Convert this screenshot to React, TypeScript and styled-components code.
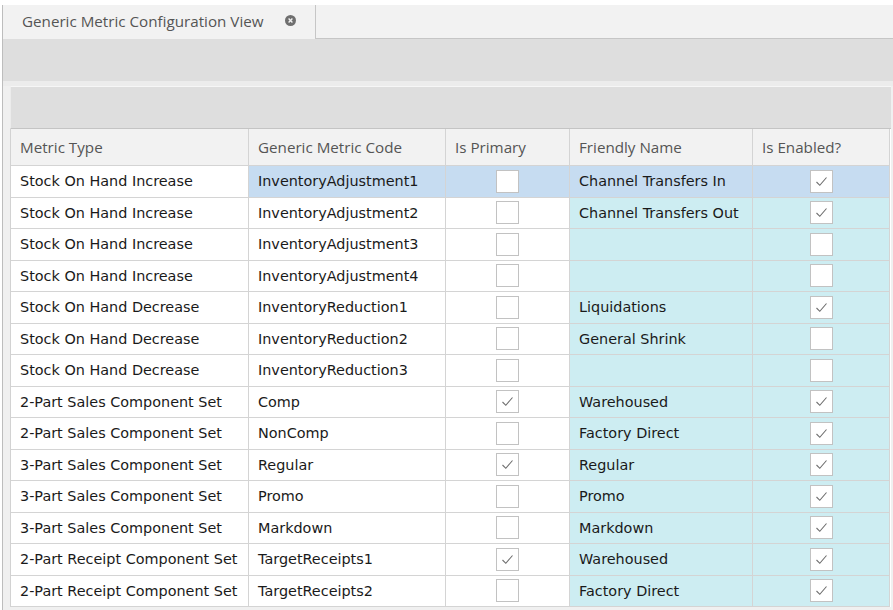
import React from "react";
import styled, { createGlobalStyle } from "styled-components";

const Global = createGlobalStyle`
  html, body { margin: 0; padding: 0; background: #ffffff; }
  body { width: 893px; height: 610px; overflow: hidden; }
  * { box-sizing: border-box; }
`;

const Page = styled.div`
  width: 893px;
  height: 610px;
  padding-top: 5px;
  padding-left: 2px;
  background: #ffffff;
`;

const Frame = styled.div`
  height: 605px;
  border-left: 1px solid #bdbdbd;
  display: flex;
  flex-direction: column;
  background: #f2f2f2;
`;

const TabStrip = styled.div`
  display: flex;
  height: 34px;
  flex: none;
`;

const Tab = styled.div`
  width: 313px;
  display: flex;
  align-items: center;
  padding-left: 19px;
  padding-bottom: 3px;
  background: #f2f2f2;
  border-right: 1px solid #c6c6c6;
  font-family: "Open Sans", "Noto Sans", sans-serif;
  font-size: 15.2px;
  color: #555555;
`;

const TabTitle = styled.span`
  flex: none;
`;

const CloseIcon = styled.svg`
  margin-left: 21px;
  flex: none;
`;

const TabFill = styled.div`
  flex: 1;
  border-bottom: 1px solid #c6c6c6;
`;

const ToolBand = styled.div`
  height: 47px;
  flex: none;
  background: #dedede;
  border-bottom: 5px solid #ececec;
`;

const GridArea = styled.div`
  flex: 1;
  display: flex;
  flex-direction: column;
  padding-left: 7px;
  padding-right: 2px;
  background: #f0f0f0;
`;

const GroupPanel = styled.div`
  height: 43px;
  flex: none;
  background: #dedede;
  border-top: 1px solid #f6f6f6;
  border-left: 1px solid #ececec;
  border-bottom: 1px solid #c4c4c4;
`;

const Grid = styled.div`
  display: grid;
  grid-template-columns: 238px 197px 124px 183px 137px;
  grid-template-rows: 37px repeat(14, 31.5px);
  border-left: 1px solid #d2d2d2;
  background: #ffffff;
`;

const HeadCell = styled.div`
  background: #f2f2f2;
  border-right: 1px solid #d4d4d4;
  border-bottom: 1px solid #d4d4d4;
  display: flex;
  align-items: center;
  padding-left: 9px;
  font-family: "Open Sans", "Noto Sans", sans-serif;
  font-size: 15.2px;
  color: #555555;
`;

type Tone = "plain" | "selected" | "friendly";

const bg: Record<Tone, string> = {
  plain: "#ffffff",
  selected: "#c6dcf1",
  friendly: "#cdedf2",
};

const Cell = styled.div<{ $tone: Tone; $center?: boolean }>`
  background: ${(p) => bg[p.$tone]};
  border-right: 1px solid #d4d4d4;
  border-bottom: 1px solid #d4d4d4;
  display: flex;
  align-items: center;
  justify-content: ${(p) => (p.$center ? "center" : "flex-start")};
  padding-left: ${(p) => (p.$center ? "0" : "9px")};
  font-family: "DejaVu Sans", Tahoma, sans-serif;
  font-size: 14.4px;
  color: #1a1a1a;
  white-space: nowrap;
  overflow: hidden;
`;

const Box = styled.div`
  width: 23px;
  height: 23px;
  background: #ffffff;
  border: 1px solid #c2c2c2;
  display: flex;
  align-items: center;
  justify-content: center;
`;

const Check = ({ on }: { on: boolean }) => (
  <Box>
    {on && (
      <svg width="13" height="11" viewBox="0 0 13 11">
        <path d="M1.5 6 L4.8 9.3 L11.5 1.5" fill="none" stroke="#6e6e6e" strokeWidth="1.1" />
      </svg>
    )}
  </Box>
);

type Row = [string, string, boolean, string, boolean];

const rows: Row[] = [
  ["Stock On Hand Increase", "InventoryAdjustment1", false, "Channel Transfers In", true],
  ["Stock On Hand Increase", "InventoryAdjustment2", false, "Channel Transfers Out", true],
  ["Stock On Hand Increase", "InventoryAdjustment3", false, "", false],
  ["Stock On Hand Increase", "InventoryAdjustment4", false, "", false],
  ["Stock On Hand Decrease", "InventoryReduction1", false, "Liquidations", true],
  ["Stock On Hand Decrease", "InventoryReduction2", false, "General Shrink", false],
  ["Stock On Hand Decrease", "InventoryReduction3", false, "", false],
  ["2-Part Sales Component Set", "Comp", true, "Warehoused", true],
  ["2-Part Sales Component Set", "NonComp", false, "Factory Direct", true],
  ["3-Part Sales Component Set", "Regular", true, "Regular", true],
  ["3-Part Sales Component Set", "Promo", false, "Promo", true],
  ["3-Part Sales Component Set", "Markdown", false, "Markdown", true],
  ["2-Part Receipt Component Set", "TargetReceipts1", true, "Warehoused", true],
  ["2-Part Receipt Component Set", "TargetReceipts2", false, "Factory Direct", true],
];

const headers = ["Metric Type", "Generic Metric Code", "Is Primary", "Friendly Name", "Is Enabled?"];

export default function App() {
  return (
    <>
      <Global />
      <Page>
        <Frame>
          <TabStrip>
            <Tab>
              <TabTitle>Generic Metric Configuration View</TabTitle>
              <CloseIcon width="11" height="11" viewBox="0 0 11 11">
                <circle cx="5.5" cy="5.5" r="5.5" fill="#6f6f6f" />
                <path d="M3.6 3.6 L7.4 7.4 M7.4 3.6 L3.6 7.4" stroke="#f2f2f2" strokeWidth="1.4" />
              </CloseIcon>
            </Tab>
            <TabFill />
          </TabStrip>
          <ToolBand />
          <GridArea>
            <GroupPanel />
            <Grid>
              {headers.map((h) => (
                <HeadCell key={h}>{h}</HeadCell>
              ))}
              {rows.map((r, i) => {
                const sel = i === 0;
                return (
                  <React.Fragment key={i}>
                    <Cell $tone="plain">{r[0]}</Cell>
                    <Cell $tone={sel ? "selected" : "plain"}>{r[1]}</Cell>
                    <Cell $tone={sel ? "selected" : "plain"} $center>
                      <Check on={r[2]} />
                    </Cell>
                    <Cell $tone={sel ? "selected" : "friendly"}>{r[3]}</Cell>
                    <Cell $tone={sel ? "selected" : "friendly"} $center>
                      <Check on={r[4]} />
                    </Cell>
                  </React.Fragment>
                );
              })}
            </Grid>
          </GridArea>
        </Frame>
      </Page>
    </>
  );
}
